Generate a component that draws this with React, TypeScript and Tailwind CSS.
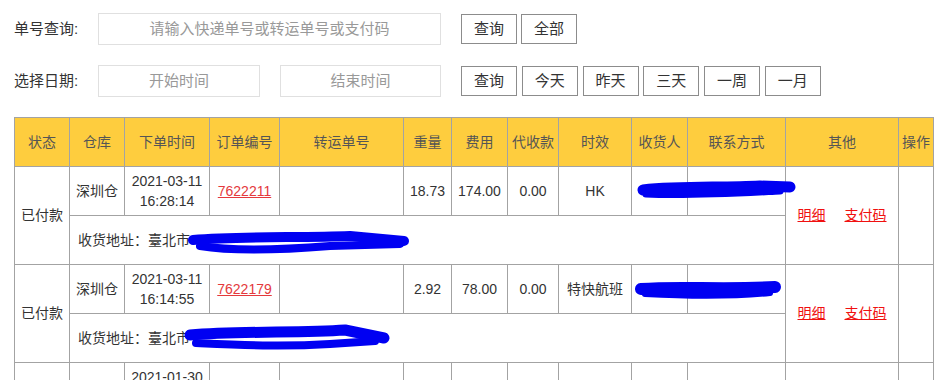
import React from 'react';

interface OrderRow {
  status: string;
  warehouse: string;
  date: string;
  time: string;
  orderNo: string;
  weight: string;
  fee: string;
  cod: string;
  service: string;
  address: string;
}

const columns = [
  { title: '状态', width: 55 },
  { title: '仓库', width: 55 },
  { title: '下单时间', width: 85 },
  { title: '订单编号', width: 70 },
  { title: '转运单号', width: 124 },
  { title: '重量', width: 48 },
  { title: '费用', width: 56 },
  { title: '代收款', width: 51 },
  { title: '时效', width: 73 },
  { title: '收货人', width: 56 },
  { title: '联系方式', width: 98 },
  { title: '其他', width: 113 },
  { title: '操作', width: 35 },
];

const orders: OrderRow[] = [
  {
    status: '已付款',
    warehouse: '深圳仓',
    date: '2021-03-11',
    time: '16:28:14',
    orderNo: '7622211',
    weight: '18.73',
    fee: '174.00',
    cod: '0.00',
    service: 'HK',
    address: '臺北市',
  },
  {
    status: '已付款',
    warehouse: '深圳仓',
    date: '2021-03-11',
    time: '16:14:55',
    orderNo: '7622179',
    weight: '2.92',
    fee: '78.00',
    cod: '0.00',
    service: '特快航班',
    address: '臺北市',
  },
  {
    status: '已付款',
    warehouse: '深圳仓',
    date: '2021-01-30',
    time: '11:02:37',
    orderNo: '7598804',
    weight: '3.10',
    fee: '82.00',
    cod: '0.00',
    service: '特快航班',
    address: '臺北市',
  },
];

const td = 'border border-[#a3a3a3] text-center align-middle px-[3px]';

// Buttons in the search area
const ActionButton = ({ label }: { label: string }) => (
  <button className="h-[30px] w-[56px] border border-[#8c8c8c] bg-white text-[15px] text-[#333]">
    {label}
  </button>
);

// Blue marker scribbles hiding private data (drawn over the table)
const Scribbles = () => (
  <svg className="pointer-events-none absolute left-0 top-0" width="951" height="380">
    <g stroke="#0000f2" strokeLinecap="round" strokeLinejoin="round" fill="none">
      {/* row 1 contact */}
      <path d="M643 190 C 680 186, 720 188, 760 186 L 790 187" strokeWidth="11" />
      <path d="M646 194 C 690 196, 740 193, 780 191" strokeWidth="7" />
      {/* row 1 address */}
      <path d="M193 240 C 240 236, 300 238, 350 236 L 404 241" strokeWidth="10" />
      <path d="M200 246 C 230 251, 280 250, 330 246 L 400 244" strokeWidth="8" />
      {/* row 2 contact */}
      <path d="M641 289 C 680 286, 720 290, 775 287" strokeWidth="12" />
      <path d="M645 294 C 700 297, 740 296, 770 293" strokeWidth="6" />
      {/* row 2 address */}
      <path d="M190 335 C 240 331, 300 333, 345 330 L 384 338" strokeWidth="11" />
      <path d="M196 343 C 240 345, 280 347, 330 344 L 375 341" strokeWidth="8" />
    </g>
  </svg>
);

const App: React.FC = () => {
  return (
    <div
      className="relative h-[380px] w-[951px] overflow-hidden bg-white text-[#333]"
      style={{ fontFamily: '"Liberation Sans", "Noto Sans CJK SC", sans-serif' }}
    >
      {/* Search form */}
      <div className="flex flex-col gap-[20px] pl-[14px] pt-[13px]">
        <div className="flex h-[32px] items-center">
          <span className="w-[84px] text-[15px]">单号查询:</span>
          <div className="flex h-[32px] w-[343px] items-center justify-center border border-[#e0e0e0] text-[15px] text-[#999]">
            请输入快递单号或转运单号或支付码
          </div>
          <div className="ml-[20px] flex gap-[4px]">
            <ActionButton label="查询" />
            <ActionButton label="全部" />
          </div>
        </div>
        <div className="flex h-[32px] items-center">
          <span className="w-[84px] text-[15px]">选择日期:</span>
          <div className="flex h-[32px] w-[162px] items-center justify-center border border-[#e0e0e0] text-[15px] text-[#999]">
            开始时间
          </div>
          <div className="ml-[20px] flex h-[32px] w-[161px] items-center justify-center border border-[#e0e0e0] text-[15px] text-[#999]">
            结束时间
          </div>
          <div className="ml-[20px] flex gap-[4.75px]">
            {['查询', '今天', '昨天', '三天', '一周', '一月'].map((l) => (
              <ActionButton key={l} label={l} />
            ))}
          </div>
        </div>
      </div>

      {/* Orders table */}
      <div className="pl-[14px] pt-[20px]">
        <table className="w-[919px] table-fixed border-collapse text-[14px]">
          <colgroup>
            {columns.map((c) => (
              <col key={c.title} style={{ width: c.width }} />
            ))}
          </colgroup>
          <thead>
            <tr className="h-[49px] bg-[#fecd3e] text-[#555]">
              {columns.map((c) => (
                <th key={c.title} className={`${td} font-normal`}>
                  {c.title}
                </th>
              ))}
            </tr>
          </thead>
          <tbody>
            {orders.map((o) => (
              <React.Fragment key={o.orderNo}>
                <tr className="h-[49px]">
                  <td className={td} rowSpan={2}>
                    {o.status}
                  </td>
                  <td className={td}>{o.warehouse}</td>
                  <td className={`${td} leading-[20px]`}>
                    {o.date}
                    <br />
                    {o.time}
                  </td>
                  <td className={td}>
                    <a href="#" className="text-[#e4393c] underline">
                      {o.orderNo}
                    </a>
                  </td>
                  <td className={td}></td>
                  <td className={td}>{o.weight}</td>
                  <td className={td}>{o.fee}</td>
                  <td className={td}>{o.cod}</td>
                  <td className={td}>{o.service}</td>
                  <td className={td}></td>
                  <td className={td}></td>
                  <td className={td} rowSpan={2}>
                    <div className="flex justify-center gap-[19px]">
                      <a href="#" className="text-[#f01010] underline">明细</a>
                      <a href="#" className="text-[#f01010] underline">支付码</a>
                    </div>
                  </td>
                  <td className={td} rowSpan={2}></td>
                </tr>
                <tr className="h-[49px]">
                  <td className="border border-[#a3a3a3] pl-[8px] text-left align-middle" colSpan={10}>
                    收货地址：{o.address}
                  </td>
                </tr>
              </React.Fragment>
            ))}
          </tbody>
        </table>
      </div>

      <Scribbles />
    </div>
  );
};

export default App;
